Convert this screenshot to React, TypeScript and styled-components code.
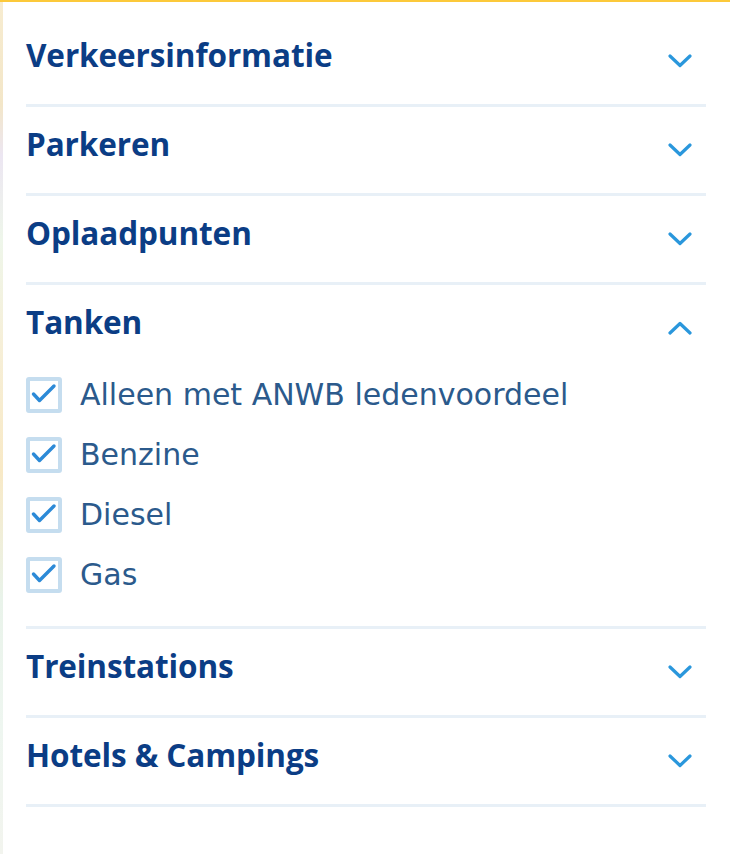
import React, { useState } from "react";
import styled, { createGlobalStyle } from "styled-components";

const GlobalStyle = createGlobalStyle`
  html, body { margin: 0; padding: 0; background: #ffffff; }
  * { box-sizing: border-box; }
`;

const Page = styled.div`
  display: flex;
  min-height: 100vh;
  border-top: 2px solid #fcc93a;
  background: #ffffff;
`;

const MapEdge = styled.div`
  width: 3px;
  flex: none;
  background: linear-gradient(
    180deg,
    #f7ecd0 0%,
    #f3e6c8 12%,
    #ece6f2 18%,
    #eef6ea 28%,
    #f6efd8 40%,
    #f8e9c6 55%,
    #e9f3ea 70%,
    #eef6f0 85%,
    #f2f4ee 100%
  );
`;

const Panel = styled.div`
  flex: 1;
  padding: 16px 24px 0 23px;
  font-family: "Open Sans", "Noto Sans", sans-serif;
`;

const Section = styled.section`
  border-bottom: 3px solid #e8f0f7;
`;

const Header = styled.button`
  display: flex;
  width: 100%;
  height: 86px;
  align-items: center;
  justify-content: space-between;
  padding: 0 14px 0 0;
  margin: 0;
  border: 0;
  background: transparent;
  cursor: pointer;
  text-align: left;
`;

const Title = styled.span`
  font-family: "Open Sans", "Noto Sans", sans-serif;
  font-weight: 700;
  font-size: 31.5px;
  line-height: 40px;
  letter-spacing: -0.1px;
  color: #0b3d85;
  padding-bottom: 12px;
`;

const Chevron = styled.svg<{ $open: boolean }>`
  width: 24px;
  height: 14px;
  flex: none;
  transform: ${(p) => (p.$open ? "rotate(180deg)" : "none")};
`;

const Options = styled.ul`
  list-style: none;
  margin: 0;
  padding: 6px 0 33px 0;
  display: flex;
  flex-direction: column;
  gap: 24px;
`;

const Option = styled.li`
  display: flex;
  align-items: center;
  gap: 18px;
  height: 36px;
  cursor: pointer;
`;

const Box = styled.span`
  width: 36px;
  height: 36px;
  flex: none;
  border: 4px solid #c5ddef;
  border-radius: 3px;
  background: #ffffff;
  display: flex;
  align-items: center;
  justify-content: center;
`;

const Label = styled.span`
  font-family: "DejaVu Sans", Verdana, sans-serif;
  font-size: 30px;
  line-height: 36px;
  color: #2b5a8c;
`;

const ChevronIcon = ({ open }: { open: boolean }) => (
  <Chevron $open={open} viewBox="0 0 24 14" fill="none">
    <path
      d="M2 2 L12 11.5 L22 2"
      stroke="#2a97dc"
      strokeWidth="3.2"
      strokeLinecap="round"
      strokeLinejoin="round"
    />
  </Chevron>
);

const Check = () => (
  <svg width="28" height="28" viewBox="0 0 28 28" fill="none">
    <path
      d="M3.5 13 L9.5 19.5 L24 5"
      stroke="#2c8ad7"
      strokeWidth="3.4"
      strokeLinecap="round"
      strokeLinejoin="round"
    />
  </svg>
);

type Item = { title: string; options?: string[] };

const items: Item[] = [
  { title: "Verkeersinformatie" },
  { title: "Parkeren" },
  { title: "Oplaadpunten" },
  {
    title: "Tanken",
    options: ["Alleen met ANWB ledenvoordeel", "Benzine", "Diesel", "Gas"],
  },
  { title: "Treinstations" },
  { title: "Hotels & Campings" },
];

export default function App() {
  const [open, setOpen] = useState<string>("Tanken");
  return (
    <>
      <GlobalStyle />
      <Page>
        <MapEdge />
        <Panel>
          {items.map((it) => {
            const isOpen = open === it.title;
            return (
              <Section key={it.title}>
                <Header onClick={() => setOpen(isOpen ? "" : it.title)}>
                  <Title>{it.title}</Title>
                  <ChevronIcon open={isOpen} />
                </Header>
                {isOpen && it.options && (
                  <Options>
                    {it.options.map((o) => (
                      <Option key={o}>
                        <Box>
                          <Check />
                        </Box>
                        <Label>{o}</Label>
                      </Option>
                    ))}
                  </Options>
                )}
              </Section>
            );
          })}
        </Panel>
      </Page>
    </>
  );
}
